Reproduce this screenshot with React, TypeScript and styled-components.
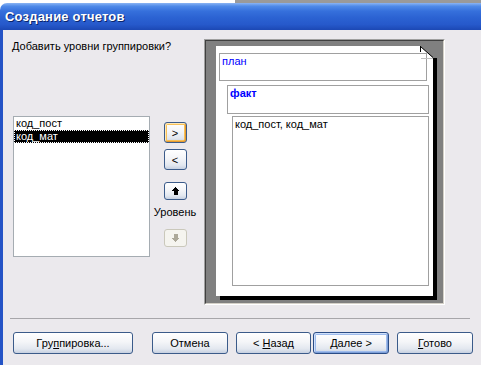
import styled, { createGlobalStyle, css } from 'styled-components';

const GlobalStyle = createGlobalStyle`
  html, body {
    margin: 0;
    padding: 0;
    background: #808080;
  }
  * {
    box-sizing: border-box;
  }
`;

const Screen = styled.div`
  width: 481px;
  height: 365px;
  overflow: hidden;
  display: flex;
  flex-direction: column;
  font-family: 'Liberation Sans', Arial, sans-serif;
  font-size: 11px;
  line-height: 13px;
  color: #000;
  background: linear-gradient(90deg, #ffffff 0, #ffffff 235px, #9a9a9a 235px);
`;

const DesktopStrip = styled.div`
  height: 3px;
  flex: none;
`;

const Window = styled.div`
  flex: 1;
  display: flex;
  flex-direction: column;
`;

const TitleBar = styled.div`
  height: 27px;
  flex: none;
  display: flex;
  align-items: center;
  padding-left: 5px;
  border-top-left-radius: 7px;
  background: linear-gradient(
    180deg,
    #8ab4f4 0%,
    #4f8ae8 12%,
    #3670dc 30%,
    #2b62d2 55%,
    #2659cb 80%,
    #1c48b4 100%
  );
`;

const TitleText = styled.span`
  color: #fff;
  font-weight: 700;
  font-size: 13px;
  letter-spacing: 0.2px;
  text-shadow: 1px 1px 0 #0a246a;
`;

const Body = styled.div`
  flex: 1;
  display: flex;
  flex-direction: column;
  background: #ebe9ed;
  border-left: 3px solid #2453c6;
`;

const MainRow = styled.div`
  display: flex;
  margin-top: 9px;
  height: 266px;
`;

const LeftCol = styled.div`
  width: 151px;
  margin-left: 9px;
  display: flex;
  flex-direction: column;
`;

const Prompt = styled.div`
  margin-top: 1px;
  white-space: nowrap;
`;

const ListBox = styled.div`
  margin-top: 63px;
  margin-left: 1px;
  width: 137px;
  height: 141px;
  background: #fff;
  border: 1px solid #a5acb2;
`;

const ListItem = styled.div<{ $selected?: boolean }>`
  height: 13px;
  padding-left: 2px;
  white-space: nowrap;
  ${(p) =>
    p.$selected &&
    css`
      background: #000;
      color: #fff;
      border: 1px dotted #fff;
      padding-left: 1px;
      line-height: 11px;
    `}
`;

const MoveCol = styled.div`
  width: 24px;
  margin-top: 83px;
  display: flex;
  flex-direction: column;
  align-items: center;
`;

const SmallButton = styled.button<{
  $kind?: 'default' | 'normal' | 'disabled';
  $h: number;
  $gap: number;
}>`
  width: 23px;
  height: ${(p) => p.$h}px;
  margin-top: ${(p) => p.$gap}px;
  padding: 0;
  display: flex;
  align-items: center;
  justify-content: center;
  font-family: inherit;
  font-size: 11px;
  color: #000;
  border-radius: 3px;
  border: 1px solid #3b5b8a;
  background: linear-gradient(180deg, #ffffff 0%, #f4f5f8 45%, #e2e7ef 80%, #c6d0e1 100%);
  ${(p) =>
    p.$kind === 'default' &&
    css`
      box-shadow: inset 1px 1px 0 #ffe9b8, inset -1px -1px 0 #e59a30,
        inset 0 0 0 2px #f7c15a;
    `}
  ${(p) =>
    p.$kind === 'disabled' &&
    css`
      border-color: #cac8bb;
      background: #f5f4ef;
    `}
`;

const LevelLabel = styled.div`
  margin-top: 6px;
  white-space: nowrap;
`;

const PreviewFrame = styled.div`
  margin-left: 17px;
  width: 241px;
  height: 266px;
  border: 1px solid;
  border-color: #a0a0a0 #ffffff #ffffff #a0a0a0;
`;

const PreviewWell = styled.div`
  height: 100%;
  padding: 5px 0 0 10px;
  background: #808080;
  border: 1px solid;
  border-color: #404040 #d4d0c8 #d4d0c8 #404040;
`;

const Page = styled.div`
  position: relative;
  width: 217px;
  height: 250px;
  background: #fff;
  box-shadow: 4px 4px 0 #000;
  display: flex;
  flex-direction: column;
  padding-top: 7px;
`;

const FoldCorner = styled.svg`
  position: absolute;
  top: 0;
  right: -4px;
`;

const GroupBox = styled.div<{
  $left: number;
  $width: number;
  $height: number;
  $gap: number;
  $tone?: 'group' | 'detail';
  $bold?: boolean;
}>`
  margin-left: ${(p) => p.$left}px;
  margin-top: ${(p) => p.$gap}px;
  width: ${(p) => p.$width}px;
  height: ${(p) => p.$height}px;
  border: 1px solid #a0a0a0;
  padding: 1px 2px;
  white-space: nowrap;
  color: ${(p) => (p.$tone === 'detail' ? '#000' : '#0000ff')};
  font-weight: ${(p) => (p.$bold ? 700 : 400)};
`;

const Separator = styled.div`
  margin-top: 13px;
  margin-left: 7px;
  width: 460px;
  height: 1px;
  background: #a7a6aa;
`;

const ButtonRow = styled.div`
  display: flex;
  margin-top: 13px;
  margin-left: 10px;
`;

const WizardButton = styled.button<{ $width: number; $gap: number; $focused?: boolean }>`
  width: ${(p) => p.$width}px;
  height: 22px;
  margin-left: ${(p) => p.$gap}px;
  padding: 0;
  font-family: inherit;
  font-size: 11px;
  color: #000;
  border-radius: 3px;
  border: 1px solid #3b5b8a;
  background: linear-gradient(180deg, #ffffff 0%, #f4f5f8 45%, #e2e7ef 80%, #c6d0e1 100%);
  ${(p) =>
    p.$focused &&
    css`
      border-color: #2a4c86;
      box-shadow: inset 1px 1px 0 #cfe0fa, inset -1px -1px 0 #7d9fd8,
        inset 0 0 0 2px #9ebbec;
    `}
`;

function ArrowIcon({ down, color }: { down?: boolean; color: string }) {
  return (
    <svg width="9" height="8" viewBox="0 0 9 8" shapeRendering="crispEdges">
      <polygon
        points={down ? '4.5,8 9,4 6.5,4 6.5,0 2.5,0 2.5,4 0,4' : '4.5,0 9,4 6.5,4 6.5,8 2.5,8 2.5,4 0,4'}
        fill={color}
      />
    </svg>
  );
}

export default function App() {
  return (
    <>
      <GlobalStyle />
      <Screen>
        <DesktopStrip />
        <Window>
          <TitleBar>
            <TitleText>Создание отчетов</TitleText>
          </TitleBar>
          <Body>
            <MainRow>
              <LeftCol>
                <Prompt>Добавить уровни группировки?</Prompt>
                <ListBox>
                  <ListItem>код_пост</ListItem>
                  <ListItem $selected>код_мат</ListItem>
                </ListBox>
              </LeftCol>
              <MoveCol>
                <SmallButton $kind="default" $h={21} $gap={0}>&gt;</SmallButton>
                <SmallButton $h={21} $gap={6}>&lt;</SmallButton>
                <SmallButton $h={18} $gap={12}>
                  <ArrowIcon color="#000" />
                </SmallButton>
                <LevelLabel>Уровень</LevelLabel>
                <SmallButton $kind="disabled" $h={18} $gap={10}>
                  <ArrowIcon down color="#aca899" />
                </SmallButton>
              </MoveCol>
              <PreviewFrame>
                <PreviewWell>
                  <Page>
                    <FoldCorner width="17" height="14" viewBox="0 0 17 14">
                      <polygon points="0,0 17,0 17,12 13,12" fill="#808080" />
                      <line x1="0.5" y1="0" x2="0.5" y2="6" stroke="#000" />
                      <line x1="0.5" y1="0.5" x2="13" y2="11.5" stroke="#000" />
                      <line x1="1" y1="12.5" x2="13" y2="12.5" stroke="#c0c0c0" />
                    </FoldCorner>
                    <GroupBox $left={3} $width={208} $height={28} $gap={0}>
                      план
                    </GroupBox>
                    <GroupBox $left={11} $width={202} $height={29} $gap={4} $bold>
                      факт
                    </GroupBox>
                    <GroupBox $left={16} $width={197} $height={170} $gap={2} $tone="detail">
                      код_пост, код_мат
                    </GroupBox>
                  </Page>
                </PreviewWell>
              </PreviewFrame>
            </MainRow>
            <Separator />
            <ButtonRow>
              <WizardButton $width={120} $gap={0}>
                Гру<u>п</u>пировка...
              </WizardButton>
              <WizardButton $width={76} $gap={19}>
                Отмена
              </WizardButton>
              <WizardButton $width={75} $gap={8}>
                &lt; <u>Н</u>азад
              </WizardButton>
              <WizardButton $width={76} $gap={2} $focused>
                <u>Д</u>алее &gt;
              </WizardButton>
              <WizardButton $width={76} $gap={8}>
                <u>Г</u>отово
              </WizardButton>
            </ButtonRow>
          </Body>
        </Window>
      </Screen>
    </>
  );
}
